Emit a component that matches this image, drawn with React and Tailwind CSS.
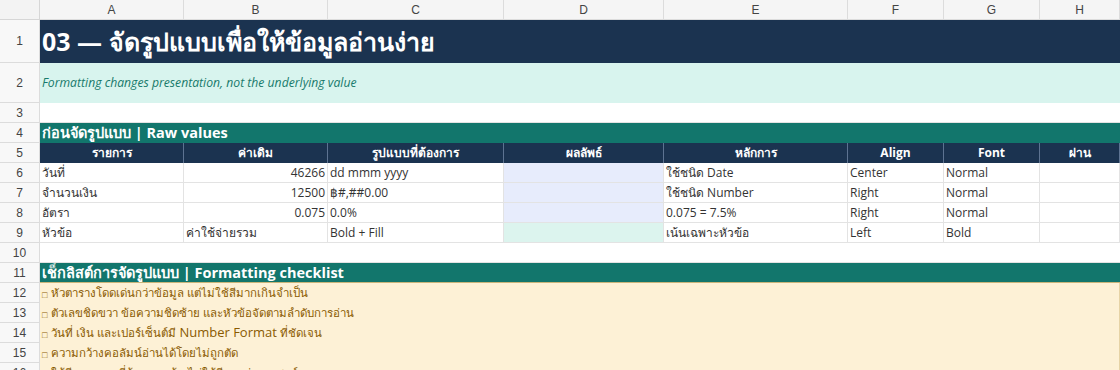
import React from 'react';

const cols = 'grid grid-cols-[40px_144px_144px_176px_160px_184px_96px_96px_80px]';
const body = { fontFamily: '"Open Sans", "Noto Sans", sans-serif' };

const dataRows = [
  { n: 6, a: 'วันที่', b: '46266', c: 'dd mmm yyyy', d: 'bg-[#e7ecfc]', e: 'ใช้ชนิด Date', f: 'Center', g: 'Normal' },
  { n: 7, a: 'จำนวนเงิน', b: '12500', c: '฿#,##0.00', d: 'bg-[#e7ecfc]', e: 'ใช้ชนิด Number', f: 'Right', g: 'Normal' },
  { n: 8, a: 'อัตรา', b: '0.075', c: '0.0%', d: 'bg-[#e7ecfc]', e: '0.075 = 7.5%', f: 'Right', g: 'Normal' },
  { n: 9, a: 'หัวข้อ', b: 'ค่าใช้จ่ายรวม', bLeft: true, c: 'Bold + Fill', d: 'bg-[#dcf4ee]', e: 'เน้นเฉพาะหัวข้อ', f: 'Left', g: 'Bold' },
];

const checklist = [
  { n: 12, t: 'หัวตารางโดดเด่นกว่าข้อมูล แต่ไม่ใช้สีมากเกินจำเป็น' },
  { n: 13, t: 'ตัวเลขชิดขวา ข้อความชิดซ้าย และหัวข้อจัดตามลำดับการอ่าน' },
  { n: 14, t: 'วันที่ เงิน และเปอร์เซ็นต์มี Number Format ที่ชัดเจน' },
  { n: 15, t: 'ความกว้างคอลัมน์อ่านได้โดยไม่ถูกตัด' },
  { n: 16, t: 'ใช้สีเฉพาะจุดที่ต้องการเน้น ไม่ใช้สีตกแต่งทุกเซลล์' },
];

// Thai glyphs come from a fallback font that runs wider than the reference, so latin runs get their own size
function Mixed({ text }) {
  const parts = text.split(/([A-Za-z][A-Za-z ]*[A-Za-z])/);
  return (
    <span>
      {parts.map((p, i) =>
        /[A-Za-z]/.test(p) ? (
          <span key={i} className="text-[13px]">{p}</span>
        ) : (
          p
        )
      )}
    </span>
  );
}

function RowNum({ n, h = 'h-5' }) {
  return (
    <div className={`${h} flex items-center justify-center bg-[#f8f8f8] border-r border-b border-[#dcdcdc] text-[12px] text-[#444]`} style={{ fontFamily: '"Liberation Sans", Arial, sans-serif' }}>
      {n}
    </div>
  );
}

function Cell({ children, className = '' }) {
  return (
    <div className={`h-5 px-[2px] flex items-center border-r border-b border-[#e3e3e3] text-[12px] text-[#333] whitespace-nowrap ${className}`}>
      {children}
    </div>
  );
}

export default function App() {
  const letters = ['A', 'B', 'C', 'D', 'E', 'F', 'G', 'H'];
  const heads = ['รายการ', 'ค่าเดิม', 'รูปแบบที่ต้องการ', 'ผลลัพธ์', 'หลักการ', 'Align', 'Font', 'ผ่าน'];

  return (
    <div className="w-[1120px] h-[370px] overflow-hidden bg-white" style={body}>
      {/* column letters */}
      <div className={`${cols} h-5`} style={{ fontFamily: '"Liberation Sans", Arial, sans-serif' }}>
        <div className="bg-[#f3f3f3] border-r border-b border-[#d6d6d6]" />
        {letters.map((l) => (
          <div key={l} className="flex items-center justify-center bg-[#f5f5f5] border-r border-b border-[#dcdcdc] text-[12px] text-[#444]">
            {l}
          </div>
        ))}
      </div>

      {/* row 1 title */}
      <div className={cols}>
        <RowNum n={1} h="h-[43px]" />
        <div className="col-span-8 h-[43px] bg-[#1b3350] flex items-center pl-[2px] text-white text-[25px] font-bold whitespace-nowrap">
          03 — จัดรูปแบบเพื่อให้ข้อมูลอ่านง่าย
        </div>
      </div>

      {/* row 2 subtitle */}
      <div className={cols}>
        <RowNum n={2} h="h-[40px]" />
        <div className="col-span-8 h-[40px] bg-[#d8f4ee] flex items-center pl-[2px] text-[12.2px] italic text-[#177a6b]">
          Formatting changes presentation, not the underlying value
        </div>
      </div>

      {/* row 3 */}
      <div className={cols}>
        <RowNum n={3} />
        <div className="col-span-8 h-5 border-b border-[#e3e3e3]" />
      </div>

      {/* row 4 section */}
      <div className={cols}>
        <RowNum n={4} />
        <div className="col-span-8 h-5 bg-[#12766c] flex items-center pl-[2px] text-white text-[14.5px] font-bold">
          ก่อนจัดรูปแบบ | Raw values
        </div>
      </div>

      {/* row 5 headers */}
      <div className={cols}>
        <RowNum n={5} />
        {heads.map((h) => (
          <div key={h} className="h-5 bg-[#1b3350] flex items-center justify-center border-r border-[#5d7391] text-white text-[12px] font-bold">
            {h}
          </div>
        ))}
      </div>

      {/* rows 6-9 */}
      {dataRows.map((r) => (
        <div key={r.n} className={cols}>
          <RowNum n={r.n} />
          <Cell>{r.a}</Cell>
          <Cell className={r.bLeft ? '' : 'justify-end'}>{r.b}</Cell>
          <Cell>{r.c}</Cell>
          <Cell className={`${r.d} border-[#c9d3f2]`} />
          <Cell>{r.e}</Cell>
          <Cell>{r.f}</Cell>
          <Cell>{r.g}</Cell>
          <Cell />
        </div>
      ))}

      {/* row 10 */}
      <div className={cols}>
        <RowNum n={10} />
        <div className="col-span-8 h-5 border-b border-[#e3e3e3]" />
      </div>

      {/* row 11 section */}
      <div className={cols}>
        <RowNum n={11} />
        <div className="col-span-8 h-5 bg-[#12766c] flex items-center pl-[2px] text-white text-[14.5px] font-bold border-b border-[#c9b57a]">
          เช็กลิสต์การจัดรูปแบบ | Formatting checklist
        </div>
      </div>

      {/* checklist */}
      {checklist.map((c) => (
        <div key={c.n} className={cols}>
          <RowNum n={c.n} />
          <div className="col-span-8 h-5 bg-[#fdf1d6] border-r border-[#e6d3a6] flex items-center pl-[2px] text-[11.5px] text-[#8a5a00] whitespace-nowrap">
            <span className="text-[9px] mr-[4px] mt-[3px]">□</span>
            <Mixed text={c.t} />
          </div>
        </div>
      ))}
    </div>
  );
}
